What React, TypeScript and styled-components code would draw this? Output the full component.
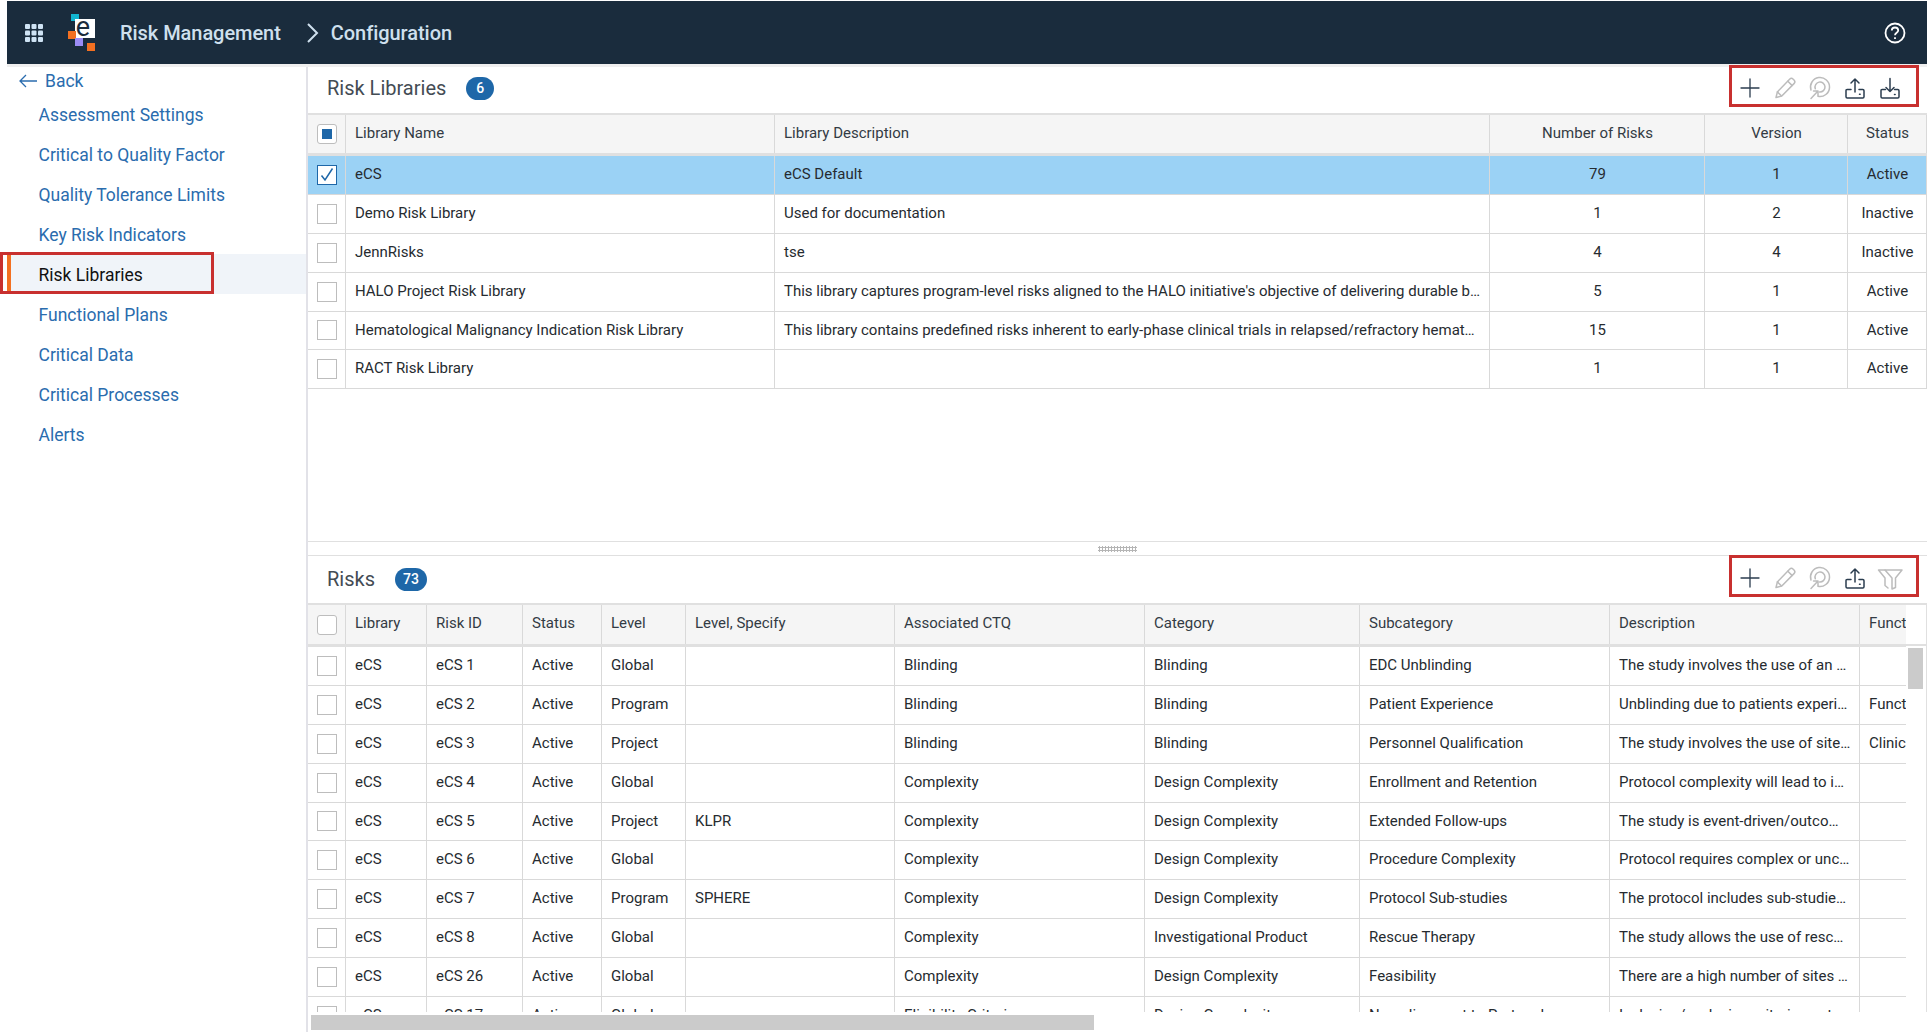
import styled, { createGlobalStyle } from 'styled-components';
import { ReactNode } from 'react';

const GlobalStyle = createGlobalStyle`
  html, body {
    margin: 0;
    padding: 0;
    background: #fff;
  }
  * {
    box-sizing: border-box;
  }
  body {
    font-family: Roboto, "Liberation Sans", sans-serif;
    color: #222;
  }
`;

const Page = styled.div`
  width: 1927px;
  height: 1032px;
  overflow: hidden;
  display: flex;
  flex-direction: column;
  padding-top: 1px;
`;

const TopBar = styled.header`
  height: 63px;
  margin-left: 7px;
  background: #1a2c3d;
  display: flex;
  align-items: center;
  flex-shrink: 0;
  padding-left: 18px;
  padding-right: 21px;
`;

const Band = styled.div`
  height: 3px;
  margin-left: 7px;
  background: #efefef;
  flex-shrink: 0;
`;

const GridIcon = styled.svg`
  width: 18px;
  height: 18px;
  margin-right: 25px;
`;

const Logo = styled.svg`
  width: 27px;
  height: 37px;
  margin-right: 25px;
`;

const Crumb = styled.span`
  font-size: 20px;
  font-weight: 500;
  color: #cfe0ee;
  letter-spacing: -0.05px;
`;

const CrumbChevron = styled.svg`
  width: 13px;
  height: 22px;
  margin: 0 12px 0 25px;
`;

const HelpIcon = styled.svg`
  width: 22px;
  height: 22px;
  margin-left: auto;
`;

const Body = styled.div`
  flex: 1;
  display: flex;
  min-height: 0;
`;

const Sidebar = styled.nav`
  width: 308px;
  flex-shrink: 0;
  border-right: 2px solid #e2e2e8;
`;

const BackLink = styled.div`
  height: 27px;
  display: flex;
  align-items: center;
  gap: 8px;
  padding-left: 19px;
  font-size: 17.5px;
  color: #2a6cae;
`;

const NavItem = styled.div<{ $active?: boolean }>`
  position: relative;
  height: 40px;
  display: flex;
  align-items: center;
  padding-top: 2px;
  padding-left: ${(p) => (p.$active ? '27.5px' : '38.5px')};
  margin-left: ${(p) => (p.$active ? '7px' : '0')};
  font-size: 17.5px;
  color: ${(p) => (p.$active ? '#111' : '#2a6cae')};
  background: ${(p) => (p.$active ? '#f0f4f9' : 'transparent')};
  border-left: ${(p) => (p.$active ? '4px solid #f37021' : '0')};

  ${(p) =>
    p.$active &&
    `
    &::after {
      content: '';
      position: absolute;
      box-sizing: border-box;
      left: -11px;
      top: -2px;
      width: 214px;
      height: 42px;
      border: 3px solid #c8302f;
    }
  `}
`;

const Main = styled.main`
  flex: 1;
  min-width: 0;
  display: flex;
  flex-direction: column;
`;

const TopPanel = styled.section`
  height: 475px;
  flex-shrink: 0;
  border-bottom: 1px solid #e0e0e0;
`;

const Toolbar = styled.div<{ $height: number; $inset: number }>`
  height: ${(p) => p.$height}px;
  display: flex;
  align-items: center;
  padding: 0 8px ${(p) => p.$inset}px 19px;
`;

const Title = styled.h2`
  margin: 0;
  font-size: 20px;
  font-weight: 400;
  color: #444c54;
`;

const Badge = styled.span`
  min-width: 28px;
  height: 23px;
  margin-left: 20px;
  padding: 0 8px;
  border-radius: 12px;
  background: #1e67a8;
  color: #fff;
  font-size: 14px;
  font-weight: 500;
  display: flex;
  align-items: center;
  justify-content: center;
`;

const ActionGroup = styled.div<{ $top: number }>`
  align-self: flex-start;
  margin-top: ${(p) => p.$top}px;
  margin-left: auto;
  width: 190px;
  height: 42px;
  border: 3px solid #c8302f;
  display: flex;
  align-items: center;
  justify-content: space-between;
  padding: 4px 13px 0 5px;
`;

const ActionIcon = styled.svg<{ $disabled?: boolean }>`
  width: 26px;
  height: 26px;
  fill: none;
  stroke: ${(p) => (p.$disabled ? '#bcbcbc' : '#2b3d4f')};
  stroke-width: 1.5;
  stroke-linecap: round;
  stroke-linejoin: round;
`;

const Row = styled.div<{ $columns: string; $height: number; $selected?: boolean }>`
  display: grid;
  grid-template-columns: ${(p) => p.$columns};
  height: ${(p) => p.$height}px;
  background: ${(p) => (p.$selected ? '#9bd2f5' : '#fff')};
  border-bottom: 1px solid #d9d9d9;
`;

const HeadRow = styled(Row)`
  background: #f5f5f5;
  border-top: 2px solid #e0e0e0;
  border-bottom: 3px solid #e0e0e0;
`;

const Cell = styled.div<{ $center?: boolean }>`
  min-width: 0;
  padding: 0 8px 0 9px;
  border-right: 1px solid #d9d9d9;
  font-size: 15px;
  line-height: 37px;
  white-space: nowrap;
  overflow: hidden;
  text-overflow: ellipsis;
  text-align: ${(p) => (p.$center ? 'center' : 'left')};
  color: #262b30;
`;

const HeadCell = styled(Cell)`
  color: #333b44;
  line-height: 37px;
`;

const CheckCell = styled.div`
  border-right: 1px solid #d9d9d9;
  display: flex;
  align-items: center;
  padding-left: 9px;
`;

const CheckBox = styled.span<{ $state?: 'checked' | 'partial'; $round?: boolean }>`
  width: 20px;
  height: 20px;
  background: #fff;
  border: 1px solid ${(p) => (p.$state === 'checked' ? '#1e67a8' : '#bdbdbd')};
  border-radius: ${(p) => (p.$round ? '3px' : '0')};
  display: flex;
  align-items: center;
  justify-content: center;

  svg {
    width: 16px;
    height: 16px;
  }
`;

const PartialMark = styled.span`
  width: 10px;
  height: 10px;
  background: #1e67a8;
`;

const Splitter = styled.div`
  height: 14px;
  flex-shrink: 0;
  border-bottom: 1px solid #e0e0e0;
  display: flex;
  align-items: center;
  justify-content: center;
`;

const Grip = styled.span`
  width: 39px;
  height: 6px;
  background-image: radial-gradient(#b5b5b5 1px, transparent 1.2px);
  background-size: 3px 3px;
`;

const RiskBody = styled.div`
  display: flex;
  height: 409px;
`;

const TableClip = styled.div`
  width: 1598px;
  height: 409px;
  overflow: hidden;
`;

const VerticalRail = styled.div`
  width: 21px;
  border-right: 1px solid #e0e0e0;
  border-top: 2px solid #e0e0e0;
`;

const RailHead = styled.div`
  height: 41px;
  border-bottom: 2px solid #e0e0e0;
`;

const VerticalThumb = styled.div`
  width: 15px;
  height: 41px;
  margin: 2px 0 0 2px;
  background: #cbcbcb;
`;

const HorizontalRail = styled.div`
  height: 15px;
  margin-top: 3px;
  padding-left: 3px;
`;

const HorizontalThumb = styled.div`
  width: 783px;
  height: 15px;
  background: #cbcbcb;
`;

const LIB_COLS = '38px 429px 715px 215px 143px 79px';
const RISK_COLS = '38px 81px 96px 79px 84px 209px 250px 215px 250px 250px 200px';

const navItems = [
  'Assessment Settings',
  'Critical to Quality Factor',
  'Quality Tolerance Limits',
  'Key Risk Indicators',
  'Risk Libraries',
  'Functional Plans',
  'Critical Data',
  'Critical Processes',
  'Alerts',
];

const libraries = [
  ['eCS', 'eCS Default', '79', '1', 'Active'],
  ['Demo Risk Library', 'Used for documentation', '1', '2', 'Inactive'],
  ['JennRisks', 'tse', '4', '4', 'Inactive'],
  [
    'HALO Project Risk Library',
    "This library captures program-level risks aligned to the HALO initiative's objective of delivering durable benefit to patients",
    '5',
    '1',
    'Active',
  ],
  [
    'Hematological Malignancy Indication Risk Library',
    'This library contains predefined risks inherent to early-phase clinical trials in relapsed/refractory hematologic malignancies',
    '15',
    '1',
    'Active',
  ],
  ['RACT Risk Library', '', '1', '1', 'Active'],
];

const risks = [
  ['eCS', 'eCS 1', 'Active', 'Global', '', 'Blinding', 'Blinding', 'EDC Unblinding', 'The study involves the use of an unblinded pharmacist', ''],
  ['eCS', 'eCS 2', 'Active', 'Program', '', 'Blinding', 'Blinding', 'Patient Experience', 'Unblinding due to patients experiencing side effects', 'Functional'],
  ['eCS', 'eCS 3', 'Active', 'Project', '', 'Blinding', 'Blinding', 'Personnel Qualification', 'The study involves the use of site staff', 'Clinical'],
  ['eCS', 'eCS 4', 'Active', 'Global', '', 'Complexity', 'Design Complexity', 'Enrollment and Retention', 'Protocol complexity will lead to increased burden', ''],
  ['eCS', 'eCS 5', 'Active', 'Project', 'KLPR', 'Complexity', 'Design Complexity', 'Extended Follow-ups', 'The study is event-driven/outcome based', ''],
  ['eCS', 'eCS 6', 'Active', 'Global', '', 'Complexity', 'Design Complexity', 'Procedure Complexity', 'Protocol requires complex or uncommon procedures', ''],
  ['eCS', 'eCS 7', 'Active', 'Program', 'SPHERE', 'Complexity', 'Design Complexity', 'Protocol Sub-studies', 'The protocol includes sub-studies and extensions', ''],
  ['eCS', 'eCS 8', 'Active', 'Global', '', 'Complexity', 'Investigational Product', 'Rescue Therapy', 'The study allows the use of rescue medication', ''],
  ['eCS', 'eCS 26', 'Active', 'Global', '', 'Complexity', 'Design Complexity', 'Feasibility', 'There are a high number of sites in the study', ''],
  ['eCS', 'eCS 17', 'Active', 'Global', '', 'Eligibility Criteria', 'Design Complexity', 'Non-alignment to Protocol', 'Inclusion/exclusion criteria are too narrow', ''],
];

const riskHeads = ['Library', 'Risk ID', 'Status', 'Level', 'Level, Specify', 'Associated CTQ', 'Category', 'Subcategory', 'Description', 'Function'];

function Icon({ disabled, children }: { disabled?: boolean; children: ReactNode }) {
  return (
    <ActionIcon viewBox="0 0 26 26" $disabled={disabled}>
      {children}
    </ActionIcon>
  );
}

const PlusIcon = () => (
  <Icon>
    <path d="M13 4v18M4 13h18" strokeWidth="1.3" />
  </Icon>
);

const PencilIcon = () => (
  <Icon disabled>
    <path d="M4 22.5l1.4-5.6L17.6 4.2c1-1 2.6-1 3.6 0l.8.8c1 1 1 2.6 0 3.6L9.8 21l-5.8 1.500z" />
    <path d="M15.800 6.200l4.200 4.200M5.400 16.900l3.900 3.900" />
  </Icon>
);

const TargetIcon = () => (
  <Icon disabled>
    <path d="M4 15A9.500 9.500 0 1 1 11 21.300" />
    <path d="M8.300 13.700A5 5 0 1 1 12.500 17" />
    <path d="M4 23.500l6.500-7M6.500 16H11v4.500" />
  </Icon>
);

const UploadIcon = () => (
  <Icon>
    <path d="M13 17V4M9 8l4-4 4 4" />
    <path d="M9 14.500H5.200c-.8 0-1.200.5-1.200 1.200v6.100c0 .7.4 1.200 1.200 1.200h15.600c.8 0 1.200-.5 1.200-1.200v-6.100c0-.7-.4-1.200-1.200-1.200H17" />
    <path d="M17.500 19.200h.6" />
  </Icon>
);

const DownloadIcon = () => (
  <Icon>
    <path d="M13 3.500v13M9 12.500l4 4 4-4" />
    <path d="M8.500 14.500H5.200c-.8 0-1.200.5-1.200 1.200v6.100c0 .7.4 1.200 1.200 1.200h15.600c.8 0 1.200-.5 1.200-1.200v-6.100c0-.7-.4-1.200-1.200-1.200h-3.300" />
    <path d="M17.500 19.400h.6" />
  </Icon>
);

const FunnelIcon = () => (
  <Icon disabled>
    <path d="M8 5h17l-6.500 8v9.500L15 24v-11L8 5z" />
    <path d="M8 5H1.500L8 13v7.500l3 2.500" />
  </Icon>
);

function Check({ state, round }: { state?: 'checked' | 'partial'; round?: boolean }) {
  return (
    <CheckCell>
      <CheckBox $state={state} $round={round}>
        {state === 'partial' && <PartialMark />}
        {state === 'checked' && (
          <svg viewBox="0 0 16 16" fill="none" stroke="#1e67a8" strokeWidth="1.5">
            <path d="M2.500 8.500l3.500 4.500L13.500 1.500" />
          </svg>
        )}
      </CheckBox>
    </CheckCell>
  );
}

export default function App() {
  return (
    <Page>
      <GlobalStyle />
      <TopBar>
        <GridIcon viewBox="0 0 18 18" fill="#cfe3f4">
          {[0, 6.5, 13].map((y) =>
            [0, 6.5, 13].map((x) => <rect key={`${x}-${y}`} x={x} y={y} width="5" height="5" rx="1" />),
          )}
        </GridIcon>
        <Logo viewBox="0 0 27 37">
          <rect x="3" y="0" width="8" height="7" fill="#12b5d0" />
          <rect x="7" y="5" width="20" height="19" fill="#fff" />
          <text x="15" y="22" fontSize="27" fontFamily="Roboto, sans-serif" textAnchor="middle" fill="#1a2c3d">
            e
          </text>
          <rect x="0" y="17" width="8" height="8" fill="#f37021" />
          <rect x="7" y="24" width="8" height="8" fill="#9b8cf5" />
          <rect x="19" y="29" width="8" height="8" fill="#f37021" />
        </Logo>
        <Crumb>Risk Management</Crumb>
        <CrumbChevron viewBox="0 0 13 22" fill="none" stroke="#cfe0ee" strokeWidth="2">
          <path d="M2 2l9 9-9 9" />
        </CrumbChevron>
        <Crumb>Configuration</Crumb>
        <HelpIcon viewBox="0 0 22 22" fill="none" stroke="#fff" strokeWidth="1.8">
          <circle cx="11" cy="11" r="9.500" />
          <path d="M7.800 8.500c0-1.800 1.400-3 3.200-3s3.200 1.200 3.200 2.900c0 2.400-3.200 2.400-3.200 4.800" />
          <path d="M11 15.300v1.800" />
        </HelpIcon>
      </TopBar>
      <Band />
      <Body>
        <Sidebar>
          <BackLink>
            <svg width="18" height="14" viewBox="0 0 18 14" fill="none" stroke="#2a6cae" strokeWidth="1.300">
              <path d="M18 7H1M7 1L1 7l6 6" />
            </svg>
            Back
          </BackLink>
          {navItems.map((item) => (
            <NavItem key={item} $active={item === 'Risk Libraries'}>
              {item}
            </NavItem>
          ))}
        </Sidebar>
        <Main>
          <TopPanel>
            <Toolbar $height={46} $inset={4}>
              <Title>Risk Libraries</Title>
              <Badge>6</Badge>
              <ActionGroup $top={-2}>
                <PlusIcon />
                <PencilIcon />
                <TargetIcon />
                <UploadIcon />
                <DownloadIcon />
              </ActionGroup>
            </Toolbar>
            <HeadRow $columns={LIB_COLS} $height={43}>
              <Check state="partial" round />
              <HeadCell>Library Name</HeadCell>
              <HeadCell>Library Description</HeadCell>
              <HeadCell $center>Number of Risks</HeadCell>
              <HeadCell $center>Version</HeadCell>
              <HeadCell $center>Status</HeadCell>
            </HeadRow>
            {libraries.map((lib, i) => (
              <Row key={lib[0]} $columns={LIB_COLS} $height={38.875} $selected={i === 0}>
                <Check state={i === 0 ? 'checked' : undefined} />
                <Cell>{lib[0]}</Cell>
                <Cell>{lib[1]}</Cell>
                <Cell $center>{lib[2]}</Cell>
                <Cell $center>{lib[3]}</Cell>
                <Cell $center>{lib[4]}</Cell>
              </Row>
            ))}
          </TopPanel>
          <Splitter>
            <Grip />
          </Splitter>
          <Toolbar $height={47} $inset={1}>
            <Title>Risks</Title>
            <Badge>73</Badge>
            <ActionGroup $top={-1}>
              <PlusIcon />
              <PencilIcon />
              <TargetIcon />
              <UploadIcon />
              <FunnelIcon />
            </ActionGroup>
          </Toolbar>
          <RiskBody>
            <TableClip>
              <HeadRow $columns={RISK_COLS} $height={44}>
                <Check round />
                {riskHeads.map((head) => (
                  <HeadCell key={head}>{head}</HeadCell>
                ))}
              </HeadRow>
              {risks.map((risk) => (
                <Row key={risk[1]} $columns={RISK_COLS} $height={38.875}>
                  <Check />
                  {risk.map((value, i) => (
                    <Cell key={i}>{value}</Cell>
                  ))}
                </Row>
              ))}
            </TableClip>
            <VerticalRail>
              <RailHead />
              <VerticalThumb />
            </VerticalRail>
          </RiskBody>
          <HorizontalRail>
            <HorizontalThumb />
          </HorizontalRail>
        </Main>
      </Body>
    </Page>
  );
}
